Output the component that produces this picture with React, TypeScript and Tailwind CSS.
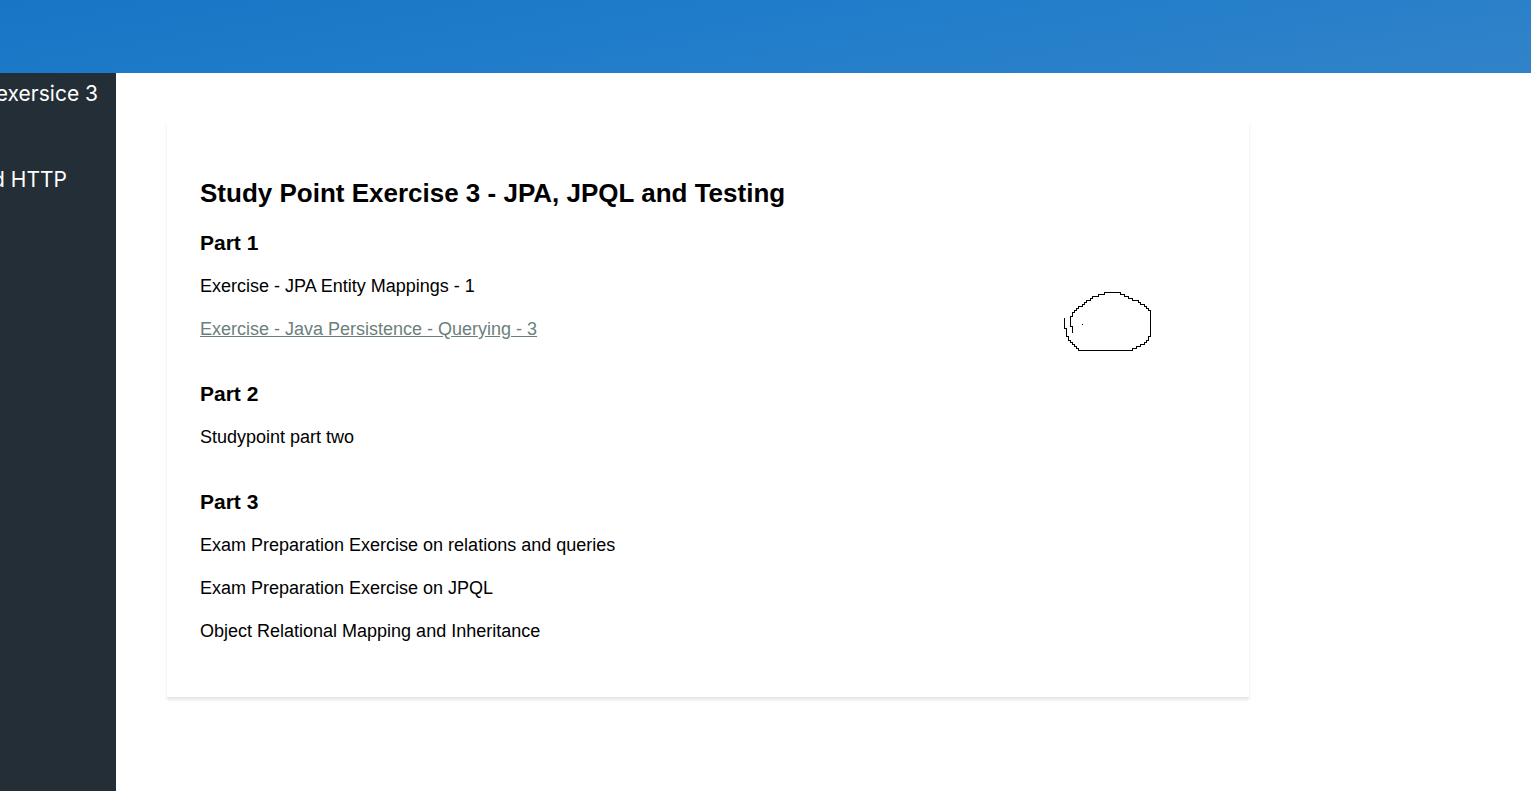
import { FC } from "react";


interface Item {
    label: string;
    active?: boolean;
}

interface Part {
    title: string;
    items: Item[];
}

const parts: Part[] = [
    {
        title: "Part 1",
        items: [
            { label: "Exercise - JPA Entity Mappings - 1" },
            { label: "Exercise - Java Persistence - Querying - 3", active: true },
        ],
    },
    {
        title: "Part 2",
        items: [{ label: "Studypoint part two" }],
    },
    {
        title: "Part 3",
        items: [
            { label: "Exam Preparation Exercise on relations and queries" },
            { label: "Exam Preparation Exercise on JPQL" },
            { label: "Object Relational Mapping and Inheritance" },
        ],
    },
];


const Sidebar: FC = () => {
    return (
        <nav className="flex w-[116px] shrink-0 flex-col items-end gap-14 overflow-hidden bg-[#242e37] pt-[6px] font-['Inter',sans-serif] text-[21px] leading-[30px] text-white">
            <a href="#exercise-3" className="whitespace-nowrap pr-[18px]">exersice 3</a>
            <a href="#http" className="whitespace-nowrap pr-[49px]">d HTTP</a>
        </nav>
    )
}


const Sketch: FC = () => {
    return (
        <svg className="absolute right-[97px] top-[170px]" width="90" height="61" viewBox="0 0 90 61" fill="none" stroke="#000" shapeRendering="crispEdges" aria-hidden="true">
            <path d="M2.5 27V37.5H4.5V45.5H6.5V49.5H8.5V51.5H10.5V53.5H12.5V55.5H14.5V57.5H16.5V59.5H70.5V57.5H74.5V55.5H78.5V53.5H82.5V51.5H84.5V49.5H86.5V45.5H88.5V19.5H86.5V17.5H84.5V15.5H82.5V13.5H78.5V11.5H76.5V9.5H70.5V7.5H66.5V5.5H62.5V3.5H58.5V1.5H42.5V3.5H36.5V5.5H30.5V7.5H28.5V9.5H24.5V11.5H22.5V13.5H20.5V15.5H16.5V17.5H14.5V19.5H12.5V21.5H10.5V25.5H8.5V35.5H10.5V42" />
            <path d="M20 33.5h1" />
        </svg>
    )
}


const Exercises: FC = () => {
    return (
        <section className="relative w-full max-w-[1082px] bg-white px-[33px] py-[52px] shadow-[0_3px_3px_rgba(0,0,0,0.1)]">
            <h1 className="text-[26px] font-bold leading-10 text-black">Study Point Exercise 3 - JPA, JPQL and Testing</h1>
            <div className="flex flex-col gap-[37px] pt-4">
                {parts.map((part) => (
                    <div key={part.title} className="flex flex-col items-start gap-4">
                        <h2 className="text-[21px] font-bold leading-7 text-black">{part.title}</h2>
                        {part.items.map((item) => (
                            <a key={item.label} href="#exercise" className={item.active ? "text-lg leading-[27px] text-[#6c7f7c] underline" : "text-lg leading-[27px] text-black"}>{item.label}</a>
                        ))}
                    </div>
                ))}
            </div>
            <Sketch />
        </section>
    )
}


export default function App() {
    return (
        <div className="flex min-h-screen flex-col bg-white font-['Liberation_Sans',Arial,sans-serif]">
            <header className="h-[73px] bg-linear-[170deg] from-[#1874c4] via-[#1f7ccb] via-40% to-[#3183c8]" />
            <div className="flex flex-1">
                <Sidebar />
                <main className="flex-1 px-[51px] py-12">
                    <Exercises />
                </main>
            </div>
        </div>
    )
}
